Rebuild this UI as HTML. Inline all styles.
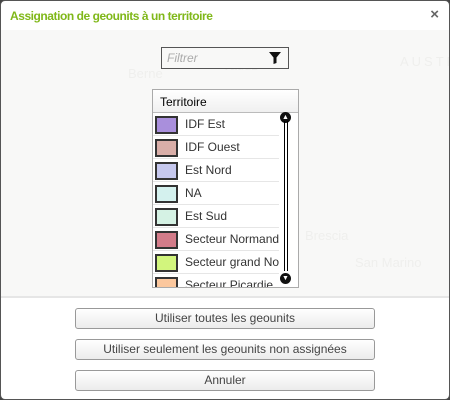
<!DOCTYPE html>
<html><head><style>
*{margin:0;padding:0;box-sizing:border-box}
body{width:450px;height:400px;background:#444;font-family:"Liberation Sans",sans-serif;overflow:hidden;position:relative}
.dlg{position:absolute;left:0;top:0;width:450px;height:400px;background:#fff;border:1px solid #555;border-radius:5px;overflow:hidden}
.title{position:absolute;left:9px;top:8px;font-size:12px;font-weight:bold;color:#80b81a;letter-spacing:-0.45px}
.x{position:absolute;right:10px;top:5px;font-size:15px;font-weight:bold;color:#666}
.body{position:absolute;left:-1px;top:29px;width:452px;height:268px;background:#f8f8f7;border-bottom:2px solid #e6e6e6}
.map{position:absolute;color:#efefed;font-size:13px}
.filter{position:absolute;left:160px;top:46px;width:128px;height:22px;border:1px solid #555;background:#f8f8f7}
.filter span{position:absolute;left:5px;top:3px;font-size:12px;font-style:italic;color:#aaa}
.list{position:absolute;left:151px;top:88px;width:147px;height:199px;border:1px solid #aaa;background:#fff;overflow:hidden}
.hd{height:23px;border-bottom:1px solid #bbb;font-size:12px;padding:5px 0 0 7px;background:linear-gradient(#fff,#f0f0f0)}
.row{height:23px;border-bottom:1px solid #e6e6e6;position:relative;width:126px}
.sw{position:absolute;left:2px;top:3px;width:23px;height:18px;border:2px solid #333}
.row span{position:absolute;left:32px;top:4px;font-size:12px;color:#333;white-space:nowrap;width:94px;overflow:hidden}
.sb{position:absolute;left:283px;top:120px;width:4px;height:150px;border-left:1px solid #000;border-right:1px solid #000}
.ar{position:absolute;left:279px;width:11px;height:11px;border-radius:50%;background:#111;color:#fff;font-size:7px;text-align:center;line-height:11px}
.btn{position:absolute;left:74px;width:300px;height:21px;border:1px solid #999;border-radius:3px;background:linear-gradient(#fff,#ececec);font-size:12px;color:#444;text-align:center;line-height:19px}
</style></head><body>
<div class="dlg">
<div class="title">Assignation de geounits à un territoire</div>
<div class="x">×</div>
<div class="body">
<div class="map" style="left:128px;top:36px">Berne</div>
<div class="map" style="left:222px;top:28px">Vaduz</div>
<div class="map" style="left:400px;top:24px;letter-spacing:3px">AUSTR</div>
<div class="map" style="left:305px;top:198px">Brescia</div>
<div class="map" style="left:355px;top:225px">San Marino</div>
</div>
<div class="filter"><span>Filtrer</span>
<svg style="position:absolute;right:7px;top:4px" width="12" height="12" viewBox="0 0 12 12"><path d="M0 0H12L7.5 5.5V11L4.5 12V5.5Z" fill="#111"/></svg></div>
<div class="list">
<div class="hd">Territoire</div>
<div class="row"><div class="sw" style="background:#a98fdc"></div><span>IDF Est</span></div>
<div class="row"><div class="sw" style="background:#d9aea8"></div><span>IDF Ouest</span></div>
<div class="row"><div class="sw" style="background:#c6c8ee"></div><span>Est Nord</span></div>
<div class="row"><div class="sw" style="background:#d4f1ee"></div><span>NA</span></div>
<div class="row"><div class="sw" style="background:#d5f2e4"></div><span>Est Sud</span></div>
<div class="row"><div class="sw" style="background:#d47c8a"></div><span>Secteur Normandie</span></div>
<div class="row"><div class="sw" style="background:#d2f57d"></div><span>Secteur grand Nord</span></div>
<div class="row"><div class="sw" style="background:#fbc79d"></div><span>Secteur Picardie</span></div>
</div>
<div class="ar" style="top:111px">▲</div>
<div class="sb"></div>
<div class="ar" style="top:272px">▼</div>
<div class="btn" style="top:307px">Utiliser toutes les geounits</div>
<div class="btn" style="top:338px">Utiliser seulement les geounits non assignées</div>
<div class="btn" style="top:369px">Annuler</div>
</div>
</body></html>
